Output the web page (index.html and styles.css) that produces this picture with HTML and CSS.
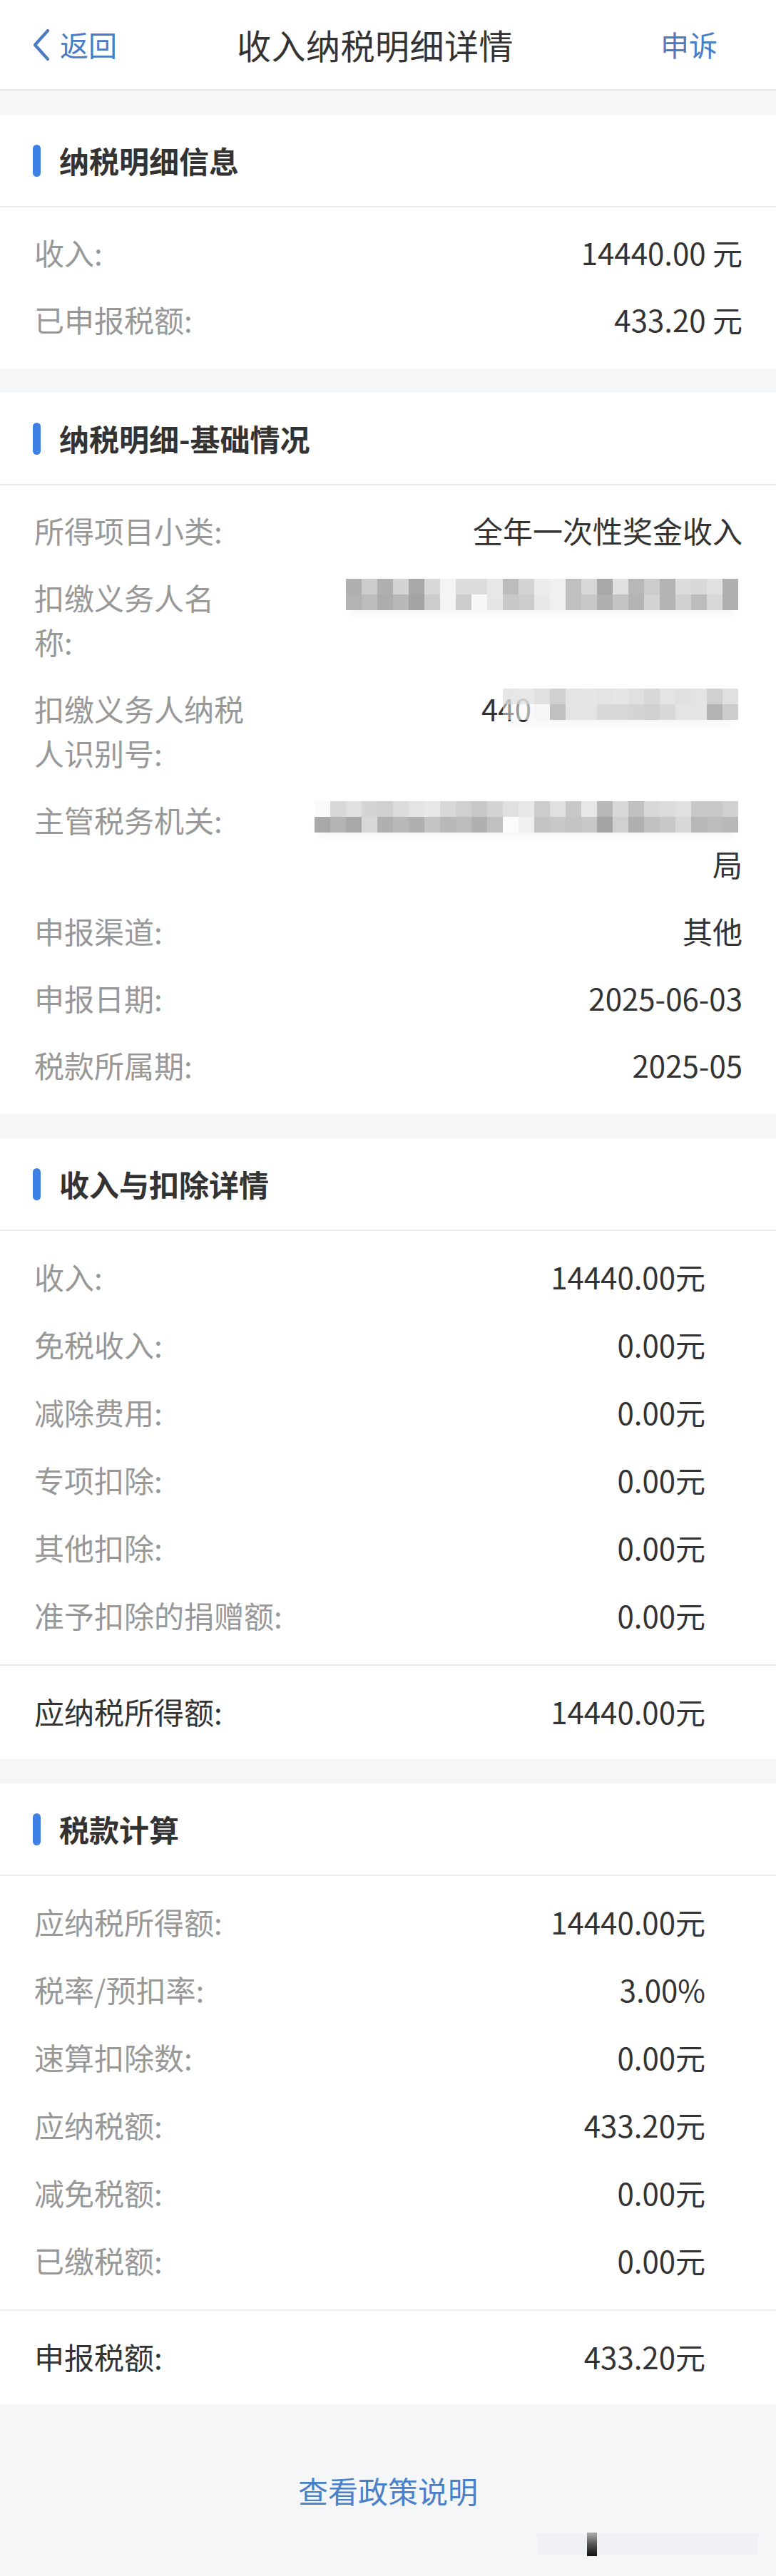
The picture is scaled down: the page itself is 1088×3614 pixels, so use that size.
FILE: index.html
```html
<!DOCTYPE html>
<html lang="zh-CN">
<head>
<meta charset="utf-8">
<title>收入纳税明细详情</title>
<link rel="stylesheet" href="styles.css">
</head>
<body>
<div class="page">
  <header class="topbar">
    <a class="nav-link back">
      <svg class="chevron" width="24" height="46" viewBox="0 0 24 46"><polyline points="21,3 3,23 21,43" fill="none" stroke="#4a7cc6" stroke-width="4.2" stroke-linecap="round" stroke-linejoin="round"/></svg>
      <span>返回</span>
    </a>
    <h1 class="page-title">收入纳税明细详情</h1>
    <a class="nav-link appeal">申诉</a>
  </header>

  <section class="card">
    <div class="sec-head"><span class="bar"></span><h2>纳税明细信息</h2></div>
    <div class="list">
      <div class="row"><span class="label">收入:</span><span class="value">14440.00 元</span></div>
      <div class="row"><span class="label">已申报税额:</span><span class="value">433.20 元</span></div>
    </div>
  </section>

  <section class="card">
    <div class="sec-head"><span class="bar"></span><h2>纳税明细-基础情况</h2></div>
    <div class="list">
      <div class="row"><span class="label">所得项目小类:</span><span class="value">全年一次性奖金收入</span></div>
      <div class="row"><span class="label">扣缴义务人名称:</span><span class="value"><span class="mosaic mosaic-a"></span></span></div>
      <div class="row"><span class="label">扣缴义务人纳税人识别号:</span><span class="value"><span class="value-line"><span>440</span><span class="mosaic mosaic-b"></span></span></span></div>
      <div class="row"><span class="label">主管税务机关:</span><span class="value"><span class="mosaic mosaic-c"></span><span class="value-line">局</span></span></div>
      <div class="row"><span class="label">申报渠道:</span><span class="value">其他</span></div>
      <div class="row"><span class="label">申报日期:</span><span class="value">2025-06-03</span></div>
      <div class="row"><span class="label">税款所属期:</span><span class="value">2025-05</span></div>
    </div>
  </section>

  <section class="card">
    <div class="sec-head"><span class="bar"></span><h2>收入与扣除详情</h2></div>
    <div class="list list--calc">
      <div class="row"><span class="label">收入:</span><span class="value">14440.00元</span></div>
      <div class="row"><span class="label">免税收入:</span><span class="value">0.00元</span></div>
      <div class="row"><span class="label">减除费用:</span><span class="value">0.00元</span></div>
      <div class="row"><span class="label">专项扣除:</span><span class="value">0.00元</span></div>
      <div class="row"><span class="label">其他扣除:</span><span class="value">0.00元</span></div>
      <div class="row"><span class="label">准予扣除的捐赠额:</span><span class="value">0.00元</span></div>
    </div>
    <div class="list list--calc summary">
      <div class="row"><span class="label">应纳税所得额:</span><span class="value">14440.00元</span></div>
    </div>
  </section>

  <section class="card">
    <div class="sec-head"><span class="bar"></span><h2>税款计算</h2></div>
    <div class="list list--calc">
      <div class="row"><span class="label">应纳税所得额:</span><span class="value">14440.00元</span></div>
      <div class="row"><span class="label">税率/预扣率:</span><span class="value">3.00%</span></div>
      <div class="row"><span class="label">速算扣除数:</span><span class="value">0.00元</span></div>
      <div class="row"><span class="label">应纳税额:</span><span class="value">433.20元</span></div>
      <div class="row"><span class="label">减免税额:</span><span class="value">0.00元</span></div>
      <div class="row"><span class="label">已缴税额:</span><span class="value">0.00元</span></div>
    </div>
    <div class="list list--calc summary">
      <div class="row"><span class="label">申报税额:</span><span class="value">433.20元</span></div>
    </div>
  </section>

  <footer class="footer">
    <a class="policy-link">查看政策说明</a>
    <svg class="smudge" width="312" height="36" viewBox="0 0 312 36">
      <defs>
        <linearGradient id="lineFade" x1="0" y1="0" x2="1" y2="0">
          <stop offset="0" stop-color="#d0d0d0" stop-opacity="0.3"/>
          <stop offset="0.85" stop-color="#b8b8b8" stop-opacity="0.8"/>
          <stop offset="1" stop-color="#333333"/>
        </linearGradient>
        <linearGradient id="barFade" x1="0" y1="0" x2="0" y2="1">
          <stop offset="0" stop-color="#b0b0b0"/>
          <stop offset="0.5" stop-color="#555555"/>
          <stop offset="1" stop-color="#111111"/>
        </linearGradient>
      </defs>
      <rect x="0" y="2" width="310" height="30" fill="#eceef1" opacity="0.6"/>
      <rect x="70" y="1" width="14" height="33" fill="url(#barFade)"/>
      <line x1="84" y1="14" x2="308" y2="14" stroke="url(#lineFade)" stroke-width="3" stroke-linecap="round"/>
      <line x1="84" y1="24" x2="308" y2="24" stroke="url(#lineFade)" stroke-width="4" stroke-linecap="round"/>
    </svg>
  </footer>
</div>
</body>
</html>
```

FILE: styles.css
```css
* { box-sizing: border-box; }

html, body {
  margin: 0;
  padding: 0;
  background: #f5f6f8;
}

body {
  font-family: "Noto Sans CJK SC", "Noto Sans", sans-serif;
  color: #333333;
}

.page {
  display: flex;
  flex-direction: column;
  gap: 34px;
  width: 1088px;
  min-height: 3614px;
}

/* top navigation */
.topbar {
  display: grid;
  grid-template-columns: 1fr auto 1fr;
  align-items: center;
  height: 127px;
  padding: 0 82px 2px 46px;
  background: #ffffff;
  border-bottom: 2px solid #e6e7ea;
}

.nav-link {
  display: flex;
  align-items: center;
  font-size: 40px;
  line-height: 56px;
  color: #4a7cc6;
}

.back { justify-self: start; gap: 14px; }
.chevron { display: block; margin-top: 2px; }
.appeal { justify-self: end; }

.page-title {
  margin: 0;
  font-size: 48px;
  line-height: 60px;
  font-weight: 400;
  color: #333333;
  letter-spacing: 0.5px;
}

/* cards */
.card {
  background: #ffffff;
}

.sec-head {
  display: flex;
  align-items: center;
  height: 130px;
  padding-left: 46px;
  border-bottom: 2px solid #ededed;
}

.bar {
  width: 11px;
  height: 45px;
  border-radius: 6px;
  background: #3f80e4;
  margin-right: 26px;
}

.sec-head h2 {
  margin: 0;
  font-size: 42px;
  line-height: 62px;
  font-weight: 700;
  color: #333333;
}

.list {
  padding: 16px 0 22px;
}

.row {
  display: flex;
  align-items: flex-start;
  padding: 16px 47px 16px 48px;
  font-size: 42px;
  line-height: 62px;
}

.label {
  flex: none;
  width: 300px;
  color: #989898;
}

.value {
  flex: 1;
  margin-left: 92px;
  text-align: right;
  color: #333333;
}

.value-line {
  display: flex;
  justify-content: flex-end;
  align-items: flex-start;
}

.list--calc .row {
  padding: 16px 99px 16px 48px;
  line-height: 63px;
}

.list--calc .label {
  width: auto;
}

.list--calc .value {
  margin-left: 40px;
}

.summary {
  border-top: 2px solid #ededed;
  padding: 16px 0 20px;
}

.summary .label {
  color: #333333;
}

/* pixelated (redacted) areas */
.mosaic {
  display: block;
  height: 44px;
  margin: 5px 6px 13px auto;
  background-repeat: no-repeat;
  background-size: 100% 50%;
  background-position: top, bottom;
  box-shadow: 0 12px 12px -4px rgba(0, 0, 0, 0.03);
}

.mosaic-a {
  width: 550px;
  background-image:
    linear-gradient(to right, #b0b0b0 0 22px, #cccccc 22px 44px, #b0b0b0 44px 66px, #d4d4d4 66px 88px, #a8a8a8 88px 110px, #d8d8d8 110px 132px, #f4f4f4 132px 154px, #dcdcdc 154px 176px, #dcdcdc 176px 198px, #e8e8e8 198px 220px, #bcbcbc 220px 242px, #d4d4d4 242px 264px, #ececec 264px 286px, #f0f0f0 286px 308px, #c0c0c0 308px 330px, #d8d8d8 330px 352px, #a8a8a8 352px 374px, #e0e0e0 374px 396px, #b8b8b8 396px 418px, #cccccc 418px 440px, #b4b4b4 440px 462px, #dcdcdc 462px 484px, #d8d8d8 484px 506px, #e0e0e0 506px 528px, #b0b0b0 528px 550px),
    linear-gradient(to right, #b3b3b3 0 22px, #bcbcbc 22px 44px, #adadad 44px 66px, #b8b8b8 66px 88px, #a4a4a4 88px 110px, #cccccc 110px 132px, #f4f4f4 132px 154px, #cccccc 154px 176px, #f8f8f8 176px 198px, #e6e6e6 198px 220px, #c8c8c8 220px 242px, #cccccc 242px 264px, #e8e8e8 264px 286px, #f0f0f0 286px 308px, #c0c0c0 308px 330px, #c8c8c8 330px 352px, #b0b0b0 352px 374px, #c4c4c4 374px 396px, #b4b4b4 396px 418px, #d4d4d4 418px 440px, #b4b4b4 440px 462px, #d0d0d0 462px 484px, #bcbcbc 484px 506px, #d8d8d8 506px 528px, #b0b0b0 528px 550px);
}

.mosaic-b {
  flex: none;
  width: 330px;
  margin: 3px 6px 15px -40px;
  background-image:
    linear-gradient(to right, rgba(224,224,224,0.8) 0 22px, rgba(228,228,228,0.85) 22px 44px, #e0e0e0 44px 66px, #d0d0d0 66px 88px, #e4e4e4 88px 110px, #e6e6e6 110px 132px, #e4e4e4 132px 154px, #e6e6e6 154px 176px, #e0e0e0 176px 198px, #d8d8d8 198px 220px, #e4e4e4 220px 242px, #e0e0e0 242px 264px, #e4e4e4 264px 286px, #d0d0d0 286px 308px, #e0e0e0 308px 330px),
    linear-gradient(to right, rgba(248,248,248,0.5) 0 22px, rgba(246,246,246,0.6) 22px 44px, #f6f6f6 44px 66px, #c0c0c0 66px 88px, #e4e4e4 88px 110px, #e4e4e4 110px 132px, #d8d8d8 132px 154px, #d8d8d8 154px 176px, #d4d4d4 176px 198px, #d0d0d0 198px 220px, #d8d8d8 220px 242px, #e4e4e4 242px 264px, #e4e4e4 264px 286px, #b4b4b4 286px 308px, #cccccc 308px 330px);
}

.mosaic-c {
  width: 594px;
  background-image:
    linear-gradient(to right, #fafafa 0 22px, #d8d8d8 22px 44px, #e0e0e0 44px 66px, #d4d4d4 66px 88px, #d0d0d0 88px 110px, #dcdcdc 110px 132px, #e4e4e4 132px 154px, #e8e8e8 154px 176px, #d8d8d8 176px 198px, #d0d0d0 198px 220px, #c8c8c8 220px 242px, #d4d4d4 242px 264px, #e0e0e0 264px 286px, #e8e8e8 286px 308px, #cccccc 308px 330px, #e0e0e0 330px 352px, #c8c8c8 352px 374px, #e8e8e8 374px 396px, #b8b8b8 396px 418px, #d8d8d8 418px 440px, #c0c0c0 440px 462px, #d8d8d8 462px 484px, #dcdcdc 484px 506px, #e0e0e0 506px 528px, #c8c8c8 528px 550px, #c8c8c8 550px 572px, #d0d0d0 572px 594px),
    linear-gradient(to right, #a8a8a8 0 22px, #b4b4b4 22px 44px, #a8a8a8 44px 66px, #d8d8d8 66px 88px, #b0b0b0 88px 110px, #b8b8b8 110px 132px, #b0b0b0 132px 154px, #c4c4c4 154px 176px, #b8b8b8 176px 198px, #bcbcbc 198px 220px, #b0b0b0 220px 242px, #c0c0c0 242px 264px, #fcfcfc 264px 286px, #f0f0f0 286px 308px, #c4c4c4 308px 330px, #c8c8c8 330px 352px, #c4c4c4 352px 374px, #c8c8c8 374px 396px, #a4a4a4 396px 418px, #d0d0d0 418px 440px, #b0b0b0 440px 462px, #c0c0c0 462px 484px, #c8c8c8 484px 506px, #d8d8d8 506px 528px, #b8b8b8 528px 550px, #bcbcbc 550px 572px, #b8b8b8 572px 594px);
}

/* footer */
.footer {
  position: relative;
  flex: 1;
  margin-top: -34px;
  min-height: 235px;
  padding-top: 90px;
  text-align: center;
  background: #f5f6f8;
}

.policy-link {
  font-size: 42px;
  line-height: 62px;
  color: #4a7fc9;
}

.smudge {
  position: absolute;
  left: 753px;
  top: 179px;
}
```
